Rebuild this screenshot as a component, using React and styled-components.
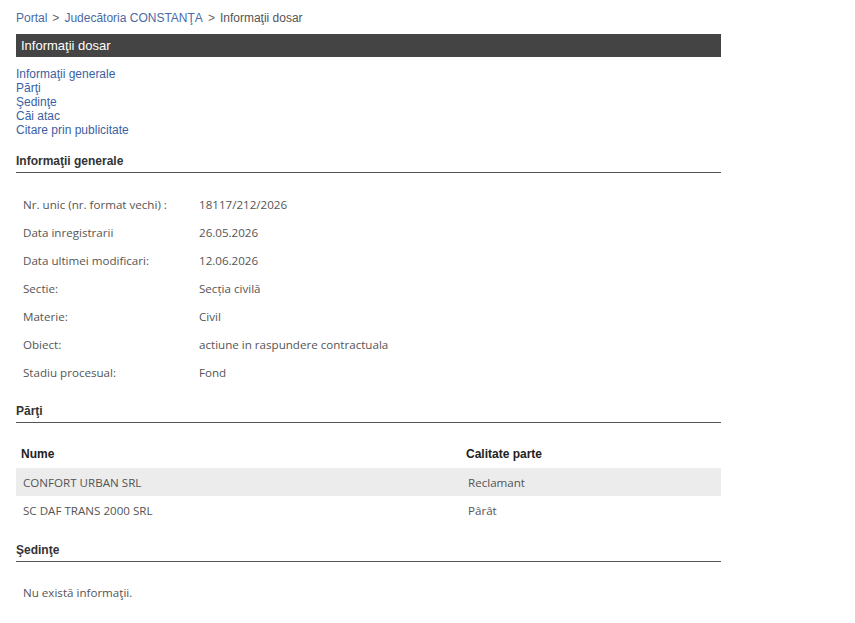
import React from 'react'
import styled, { createGlobalStyle } from 'styled-components'

const GlobalStyle = createGlobalStyle`
  body {
    margin: 0;
    background: #fff;
    font-family: "Liberation Sans", Arial, sans-serif;
  }
`

const generalInfo = [
  ['Nr. unic (nr. format vechi) :', '18117/212/2026'],
  ['Data inregistrarii', '26.05.2026'],
  ['Data ultimei modificari:', '12.06.2026'],
  ['Sectie:', 'Secția civilă'],
  ['Materie:', 'Civil'],
  ['Obiect:', 'actiune in raspundere contractuala'],
  ['Stadiu procesual:', 'Fond'],
]

const parties = [
  ['CONFORT URBAN SRL', 'Reclamant'],
  ['SC DAF TRANS 2000 SRL', 'Pârât'],
]

const navLinks = [
  'Informaţii generale',
  'Părţi',
  'Şedinţe',
  'Căi atac',
  'Citare prin publicitate',
]

const App = () => {
  return (
    <Page>
      <GlobalStyle />
      <Breadcrumb>
        <Crumb>Portal</Crumb>
        <Sep>&gt;</Sep>
        <Crumb>Judecătoria CONSTANŢA</Crumb>
        <Sep>&gt;</Sep>
        <Current>Informaţii dosar</Current>
      </Breadcrumb>

      <TitleBar>Informaţii dosar</TitleBar>

      <NavList>
        {navLinks.map(link => (
          <NavLink key={link} href="#">
            {link}
          </NavLink>
        ))}
      </NavList>

      <SectionHeading>Informaţii generale</SectionHeading>
      <InfoTable>
        <tbody>
          {generalInfo.map(([label, value]) => (
            <tr key={label}>
              <LabelCell>{label}</LabelCell>
              <ValueCell>{value}</ValueCell>
            </tr>
          ))}
        </tbody>
      </InfoTable>

      <SectionHeading>Părţi</SectionHeading>
      <PartiesTable>
        <thead>
          <tr>
            <HeadCell>Nume</HeadCell>
            <HeadCell>Calitate parte</HeadCell>
          </tr>
        </thead>
        <tbody>
          {parties.map(([name, role], i) => (
            <PartyRow key={name} $shaded={i % 2 === 0}>
              <PartyCell>{name}</PartyCell>
              <PartyCell>{role}</PartyCell>
            </PartyRow>
          ))}
        </tbody>
      </PartiesTable>

      <SectionHeading>Şedinţe</SectionHeading>
      <EmptyNote>Nu există informaţii.</EmptyNote>
    </Page>
  )
}

export default App

const Page = styled.div`
  width: 705px;
  padding: 10px 0 20px 16px;
`

const Breadcrumb = styled.div`
  display: flex;
  gap: 5px;
  font-size: 12px;
  line-height: 16px;
  margin-bottom: 8px;
`

const Crumb = styled.a`
  color: #4a6aa5;
  text-decoration: none;
`

const Sep = styled.span`
  color: #666;
`

const Current = styled.span`
  color: #555;
`

const TitleBar = styled.div`
  background: #444;
  color: #fff;
  font-size: 13px;
  height: 23px;
  line-height: 23px;
  padding-left: 5px;
  margin-bottom: 10px;
`

const NavList = styled.div`
  display: flex;
  flex-direction: column;
  margin-bottom: 16px;
`

const NavLink = styled.a`
  color: #3b5fa3;
  font-size: 12px;
  line-height: 14px;
  text-decoration: none;
`

const SectionHeading = styled.div`
  font-size: 12px;
  font-weight: bold;
  color: #333;
  line-height: 16px;
  padding-bottom: 3px;
  border-bottom: 1px solid #555;
`

const InfoTable = styled.table`
  border-collapse: collapse;
  margin: 17px 0 17px;
  font-family: "Open Sans", sans-serif;
  font-size: 11.6px;
  color: #555;
`

const LabelCell = styled.td`
  width: 176px;
  height: 28px;
  padding: 0 0 0 7px;
`

const ValueCell = styled.td`
  padding: 0;
`

const PartiesTable = styled.table`
  width: 100%;
  border-collapse: collapse;
  margin: 17px 0 18px;
`

const HeadCell = styled.th`
  text-align: left;
  font-size: 12px;
  font-weight: bold;
  color: #222;
  height: 28px;
  padding: 0 0 0 5px;

  &:first-child {
    width: 440px;
  }
`

const PartyRow = styled.tr`
  background: ${p => (p.$shaded ? '#ececec' : 'transparent')};
`

const PartyCell = styled.td`
  font-family: "Open Sans", sans-serif;
  font-size: 11.6px;
  color: #555;
  height: 28px;
  padding: 0 0 0 7px;
`

const EmptyNote = styled.div`
  font-family: "Open Sans", sans-serif;
  font-size: 11.6px;
  color: #555;
  padding: 23px 0 0 7px;
`
